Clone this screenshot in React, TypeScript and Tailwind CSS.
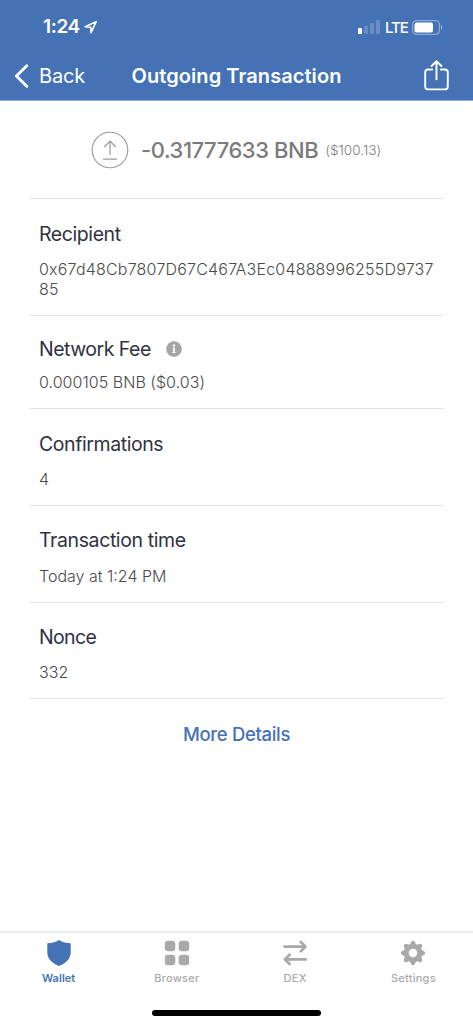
import type { ReactNode } from "react";
import clsx from "clsx";

interface DetailRowProps {
  label: string;
  value: string;
  className: string;
  labelClass: string;
  valueClass: string;
  info?: boolean;
}

function StatusBar() {
  return (
    <div className="flex h-[52px] items-center pl-[43px] pr-[30px] pt-[2px]">
      <span className="text-[19px] font-semibold leading-6 tracking-[-0.35px]">1:24</span>
      <svg className="ml-[4px]" width="14" height="14" viewBox="0 0 14 14" fill="none">
        <path d="M1.2 6.8 L12.2 1.6 L7 12.6 L6.7 7.2 Z" stroke="white" strokeWidth="1.6" strokeLinejoin="round" />
      </svg>
      <div className="ml-auto flex items-center">
        <svg width="22" height="14" viewBox="0 0 22 14" fill="white">
          <rect x="0" y="8" width="4" height="6" rx="1" />
          <rect x="6" y="6" width="4" height="8" rx="1" opacity="0.2" />
          <rect x="12" y="3" width="4" height="11" rx="1" opacity="0.2" />
          <rect x="18" y="0" width="4" height="14" rx="1" opacity="0.2" />
        </svg>
        <span className="ml-[5px] w-[23px] pt-px text-[15px] font-medium leading-5 tracking-[-1.1px]">LTE</span>
        <svg className="ml-[4px]" width="31" height="15" viewBox="0 0 31 15" fill="none">
          <rect x="0.6" y="0.6" width="26.8" height="13.8" rx="4" stroke="white" strokeOpacity="0.4" strokeWidth="1.2" />
          <rect x="2.5" y="2.5" width="18.5" height="10" rx="2" fill="white" />
          <path d="M29 5 C30.6 5.6 30.6 9.4 29 10 Z" fill="white" fillOpacity="0.5" />
        </svg>
      </div>
    </div>
  );
}

function NavBar() {
  return (
    <div className="grid h-[48px] grid-cols-[117px_1fr_117px] items-center">
      <div className="flex items-center pl-[14px]">
        <svg width="15" height="24" viewBox="0 0 15 24" fill="none">
          <path d="M12.8 1.8 L2.4 12 L12.8 22.2" stroke="white" strokeWidth="2.9" strokeLinecap="round" strokeLinejoin="round" />
        </svg>
        <span className="ml-[10px] text-[20px] leading-6 tracking-[-0.15px]">Back</span>
      </div>
      <h1 className="whitespace-nowrap text-center text-[20px] font-semibold leading-6 tracking-[0.07px]">
        Outgoing Transaction
      </h1>
      <div className="flex justify-end pr-[24px]">
        <svg className="-mt-[2px]" width="25" height="31" viewBox="0 0 25 31" fill="none" stroke="white" strokeWidth="1.9" strokeLinecap="round" strokeLinejoin="round">
          <path d="M8.2 9.5 H4 Q1.2 9.5 1.2 12.3 V26.2 Q1.2 29.4 4.2 29.4 H20.8 Q23.8 29.4 23.8 26.2 V12.3 Q23.8 9.5 21 9.5 H16.8" />
          <path d="M12.5 19.2 V1.3 M7.6 6 L12.5 1.2 L17.4 6" />
        </svg>
      </div>
    </div>
  );
}

function DetailRow({ label, value, className, labelClass, valueClass, info }: DetailRowProps) {
  return (
    <div className={clsx("border-b border-[#e4e4e6] pl-[10px] pr-[8px]", className)}>
      <div className="flex items-center">
        <h2 className={clsx("text-[19.5px] leading-6 text-[#2f3240]", labelClass)}>{label}</h2>
        {info && (
          <svg className="ml-[15px]" width="16" height="16" viewBox="0 0 16 16">
            <circle cx="8" cy="8" r="7.8" fill="#a5a5a7" />
            <path d="M6.6 6.6 H8.9 V11 H9.5 V12 H6.5 V11 H7.2 V7.6 H6.6 Z" fill="white" />
            <circle cx="8" cy="4.5" r="1.2" fill="white" />
          </svg>
        )}
      </div>
      <p className={clsx("break-all text-[16px] font-light leading-5 text-[#4a4a4c]", valueClass)}>{value}</p>
    </div>
  );
}

function Tab({ label, active, children }: { label: string; active?: boolean; children: ReactNode }) {
  return (
    <div className={clsx("flex flex-1 flex-col items-center pt-[6px]", active ? "text-[#4472b5]" : "text-[#a9a9ab]")}>
      <svg className="-ml-px" width="28" height="28" viewBox="0 0 28 28" fill="currentColor">
        {children}
      </svg>
      <span
        className={clsx(
          "-ml-px mt-[3px] text-[11px] leading-4",
          active ? "font-semibold tracking-[0.05px]" : "font-medium tracking-[0.25px]",
        )}
      >
        {label}
      </span>
    </div>
  );
}

// one tooth every 45 degrees
const teeth = [0, 45, 90, 135, 180, 225, 270, 315];

export default function App() {
  return (
    <div className="flex h-[1024px] w-[473px] flex-col overflow-hidden bg-white font-['Inter',sans-serif]">
      <header className="h-[101px] border-b border-[#8fabd3] bg-[#4472b5] text-white">
        <StatusBar />
        <NavBar />
      </header>

      <main className="flex-1 px-[29px]">
        {/* Amount */}
        <div className="flex h-[98px] items-center border-b border-[#e4e4e6] pl-[62px]">
          <svg className="shrink-0" width="38" height="38" viewBox="0 0 38 38" fill="none" stroke="#9a9a9a">
            <circle cx="19" cy="19" r="17.8" strokeWidth="1.1" />
            <path d="M19 24 V10.5 M13.2 16 L19 10 L24.8 16 M12 28.2 H26" strokeWidth="1.2" />
          </svg>
          <span className="ml-[12px] whitespace-nowrap text-[22px] font-medium leading-7 tracking-[-0.45px] text-[#7b7b7d]">
            -0.31777633 BNB
          </span>
          <span className="ml-[7px] whitespace-nowrap text-[13.5px] font-light leading-5 tracking-[0.04px] text-[#7d7d7f]">
            ($100.13)
          </span>
        </div>

        <DetailRow
          label="Recipient"
          value="0x67d48Cb7807D67C467A3Ec04888996255D973785"
          className="h-[117px] pt-[23px]"
          labelClass="tracking-[-0.42px]"
          valueClass="mt-[13px] tracking-[0.2px]"
        />
        <DetailRow
          label="Network Fee"
          value="0.000105 BNB ($0.03)"
          className="h-[93px] pt-[21px]"
          labelClass="tracking-[-0.5px]"
          valueClass="mt-[11px] tracking-[0.04px]"
          info
        />
        <DetailRow
          label="Confirmations"
          value="4"
          className="h-[97px] pt-[23px]"
          labelClass="tracking-[-0.42px]"
          valueClass="mt-[13px]"
        />
        <DetailRow
          label="Transaction time"
          value="Today at 1:24 PM"
          className="h-[97px] pt-[22px]"
          labelClass="tracking-[-0.4px]"
          valueClass="mt-[14px]"
        />
        <DetailRow
          label="Nonce"
          value="332"
          className="h-[96px] pt-[22px]"
          labelClass="tracking-[-0.65px]"
          valueClass="mt-[13px] tracking-[0.1px]"
        />

        <button className="mt-[23px] block w-full text-center text-[18.5px] font-medium leading-6 tracking-[-0.33px] text-[#4472b5]">
          More Details
        </button>
      </main>

      {/* Tab bar */}
      <nav className="h-[93px] border-t-2 border-[#ececec]">
        <div className="flex h-[75px]">
          <Tab label="Wallet" active>
            <path d="M14 1 C17.5 3.2 21.5 4.2 25.7 4.3 V13.5 C25.7 20 20.5 24.3 14 27 C7.5 24.3 2.3 20 2.3 13.5 V4.3 C6.5 4.2 10.5 3.2 14 1 Z" />
          </Tab>
          <Tab label="Browser">
            <rect x="1.8" y="1.8" width="10.5" height="10.5" rx="3.2" />
            <rect x="15.7" y="1.8" width="10.5" height="10.5" rx="3.2" />
            <rect x="1.8" y="15.7" width="10.5" height="10.5" rx="3.2" />
            <rect x="15.7" y="15.7" width="10.5" height="10.5" rx="3.2" />
          </Tab>
          <Tab label="DEX">
            <path
              d="M3.5 7.6 H24.5 M19.8 3 L24.6 7.6 L19.8 12.2 M24.8 20.4 H4 M8.6 15.8 L3.8 20.4 L8.6 25"
              fill="none"
              stroke="currentColor"
              strokeWidth="2.7"
              strokeLinecap="round"
              strokeLinejoin="round"
            />
          </Tab>
          <Tab label="Settings">
            <circle cx="14" cy="14" r="6.8" fill="none" stroke="currentColor" strokeWidth="5" />
            {teeth.map((angle) => (
              <path key={angle} d="M10.8 6 L12.2 2.8 Q14 0.8 15.8 2.8 L17.2 6 Z" transform={`rotate(${angle} 14 14)`} />
            ))}
          </Tab>
        </div>
        <div className="mx-auto mt-[2px] h-[6px] w-[169px] rounded-full bg-black" />
      </nav>
    </div>
  );
}
